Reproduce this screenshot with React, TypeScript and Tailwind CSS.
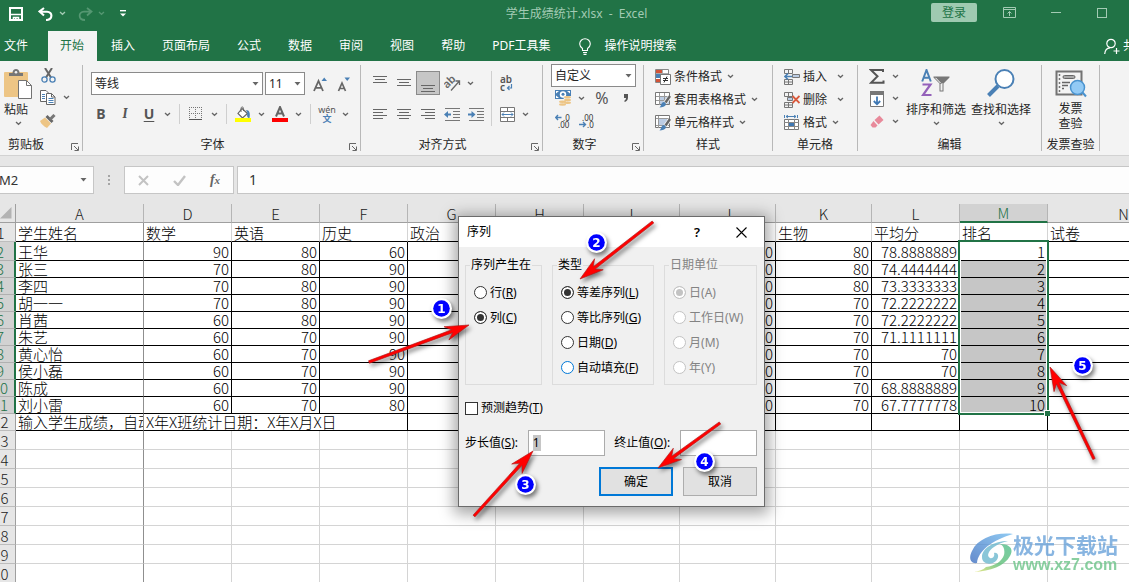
import type { ReactNode } from 'react';

/* ---------- drawing helpers ---------- */

function Svg({ w, h, children }: { w: number; h: number; children: ReactNode }) {
  return (
    <svg width={w} height={h} viewBox={`0 0 ${w} ${h}`} fill="none" className="shrink-0" aria-hidden="true">
      {children}
    </svg>
  );
}

const Chevron = ({ color = '#666' }: { color?: string }) => (
  <Svg w={7} h={5}>
    <path d="M1 1l2.5 2.3L6 1" stroke={color} strokeWidth="1.3" />
  </Svg>
);

const Triangle = () => (
  <Svg w={7} h={4}>
    <path d="M0.5 0h6L3.5 3.5z" fill="#666" />
  </Svg>
);

function Lines({ rows, h = 14 }: { rows: [number, number][]; h?: number }) {
  return (
    <Svg w={14} h={h}>
      {rows.map(([x, w], i) => (
        <path key={i} d={`M${x} ${i * 3 + 0.5}h${w}`} stroke="#666" />
      ))}
    </Svg>
  );
}

const SaveIcon = () => (
  <Svg w={14} h={14}>
    <path d="M1 1h12v12H1z" stroke="#fff" strokeWidth="2" />
    <path d="M2 7.500h10M4.500 13V10.500h5V13" stroke="#fff" strokeWidth="1.600" />
    <path d="M6 11h1.600v2H6z" fill="#fff" />
  </Svg>
);

const UndoIcon = () => (
  <Svg w={15} h={14}>
    <path d="M6 1L1.5 4.5 6 8.5M2 4.7h7c6 0 6 8.3-1 8.3" stroke="#fff" strokeWidth="2.1" />
  </Svg>
);

const RedoIcon = () => (
  <Svg w={15} h={14}>
    <path d="M9 1l4.5 3.5L9 8.5M13 4.7H6c-6 0-6 8.3 1 8.3" stroke="#559772" strokeWidth="1.8" />
  </Svg>
);

const PasteIcon = () => (
  <Svg w={28} h={30}>
    <rect x="0" y="3" width="24" height="25" rx="1" fill="#edc585" />
    <path d="M5 7V4h3.5C8.500 1.500 10 0 12 0s3.500 1.500 3.500 4H19v3z" fill="#767676" />
    <circle cx="12" cy="3.200" r="1.300" fill="#f3f3f3" />
    <path d="M14.500 11.500h8l5 5v13h-13z" fill="#fff" stroke="#737373" />
    <path d="M22.500 11.500v5h5" stroke="#737373" />
  </Svg>
);

const CutIcon = () => (
  <Svg w={15} h={15}>
    <path d="M4 0l6 9.500M11 0L5 9.500" stroke="#666" strokeWidth="2" />
    <circle cx="3.500" cy="11.500" r="2.600" stroke="#4a80b5" strokeWidth="1.300" />
    <circle cx="11.500" cy="11.500" r="2.600" stroke="#4a80b5" strokeWidth="1.300" />
  </Svg>
);

const CopyIcon = () => (
  <Svg w={16} h={15}>
    <path d="M.5.500h5.500l3 3v8H.500z" fill="#fff" stroke="#666" />
    <path d="M2 4.500h3M2 6.500h3M2 8.500h3" stroke="#4a80b5" />
    <path d="M6.500 3.500h5l3.500 3.500v7.500H6.500z" fill="#fff" stroke="#666" />
    <path d="M11.500 3.500V7H15" stroke="#666" />
    <path d="M8.500 8.500h5M8.500 10.500h5M8.500 12.500h5" stroke="#4a80b5" />
  </Svg>
);

const BrushIcon = () => (
  <Svg w={16} h={14}>
    <path d="M0 7l5-3.500 6 6L7 14C4 12.500 1 10 0 7z" fill="#edc585" />
    <path d="M5.500 3l2-2 6 6-2 2z" fill="#666" />
    <path d="M10 5.500L14.500 1" stroke="#777" strokeWidth="3" />
  </Svg>
);

const GrowFont = ({ shrink = false }: { shrink?: boolean }) => (
  <Svg w={14} h={15}>
    {shrink ? (
      <>
        <path d="M1.500 14L5 6l3.500 8M2.800 11.500h4.500" stroke="#666" strokeWidth="1.700" />
        <path d="M7.500 .5h5.500L10.200 4z" fill="#4a80b5" />
      </>
    ) : (
      <>
        <path d="M1 14L5.500 4 10 14M2.500 10.800h6" stroke="#666" strokeWidth="1.800" />
        <path d="M8.500 4H14L11.200 .5z" fill="#4a80b5" />
      </>
    )}
  </Svg>
);

const BorderIcon = () => (
  <Svg w={14} h={14}>
    <path d="M.5 0v12M6.500 0v12M12.500 0v12M0 .5h13M0 6.500h13" stroke="#777" strokeDasharray="1 1" />
    <path d="M0 12.500h13" stroke="#555" />
  </Svg>
);

const FillIcon = () => (
  <Svg w={16} h={16}>
    <path d="M7 2.500l5.500 5-5 4.500L3 7.500z" fill="#fff" stroke="#666" strokeWidth="1.200" />
    <path d="M6 6V2.500C6 .5 8.500.5 8.500 2.500V5" stroke="#666" />
    <path d="M11 4c3.500 0 4.500 3.500 3.500 8-2 0-3-2-2-5z" fill="#4a80b5" />
    <path d="M0 12h16v4H0z" fill="#ff0" />
  </Svg>
);

const FontColorIcon = () => (
  <Svg w={16} h={16}>
    <path d="M4 10.500L8 1l4 9.500M5.400 7.500h5.200" stroke="#666" strokeWidth="2" />
    <path d="M0 12h16v4H0z" fill="#fe0000" />
  </Svg>
);

const OrientationIcon = () => (
  <Svg w={17} h={17}>
    <text x="0" y="11" fontSize="11" fontWeight="600" fontFamily="Noto Sans" fill="#666" transform="rotate(-45 5 9)">
      ab
    </text>
    <path d="M7 15.500L15.500 6M11.500 6h4v4" stroke="#666" strokeWidth="1.300" />
  </Svg>
);

const Indent = ({ right = false }: { right?: boolean }) => (
  <Svg w={17} h={13}>
    <path d="M1 .5h15M9 3.500h7M9 6.500h7M9 9.500h7M1 12.500h15" stroke="#777" />
    {right ? (
      <>
        <path d="M0 6.500h4" stroke="#4a80b5" strokeWidth="2" />
        <path d="M3.500 3v7L7.500 6.500z" fill="#4a80b5" />
      </>
    ) : (
      <>
        <path d="M7 6.500H3" stroke="#4a80b5" strokeWidth="2" />
        <path d="M4 3v7L0 6.500z" fill="#4a80b5" />
      </>
    )}
  </Svg>
);

const WrapIcon = () => (
  <Svg w={14} h={17}>
    <text x="0" y="8" fontSize="10" fontWeight="600" fontFamily="Noto Sans" fill="#555">ab</text>
    <text x="0" y="16" fontSize="10" fontWeight="600" fontFamily="Noto Sans" fill="#555">c</text>
    <path d="M11.500 9v4H7.500M9.500 11l-2 2 2 2" stroke="#4a80b5" strokeWidth="1.200" />
  </Svg>
);

const MergeIcon = () => (
  <Svg w={15} h={15}>
    <path d="M.5.5h14v14H.5zM.5 4.500h14M.5 10.500h14M7.500.5v4M7.500 10.500v4" fill="#fff" stroke="#777" />
    <path d="M2 7.500h11M4 5.500l-2 2 2 2M11 5.500l2 2-2 2" stroke="#4a80b5" />
  </Svg>
);

const MoneyIcon = () => (
  <Svg w={16} h={16}>
    <path d="M0 0h16v9H0z" fill="#4a80b5" />
    <path d="M1 1h3L1 3.500zM15 1h-3l3 2.500zM1 8h3L1 5.500z" fill="#fff" />
    <circle cx="8" cy="4.500" r="3.200" fill="#fff" />
    <circle cx="8" cy="4.300" r="1.500" fill="#4a80b5" />
    <path d="M8.500 6H16v8H9zM3 9.500h6V16H3z" fill="#f3f3f3" />
    <g fill="#edc585">
      <ellipse cx="12.500" cy="7.300" rx="3.500" ry="1.300" />
      <ellipse cx="12.500" cy="10" rx="3.500" ry="1.200" />
      <ellipse cx="12.500" cy="12.700" rx="3.500" ry="1.200" />
      <ellipse cx="7.500" cy="11.700" rx="3.500" ry="1.200" />
      <ellipse cx="7.500" cy="14.500" rx="3.500" ry="1.200" />
    </g>
  </Svg>
);

const Decimal = ({ less = false }: { less?: boolean }) => (
  <Svg w={17} h={15}>
    <g fontSize="8" fontFamily="Noto Sans" fill="#333">
      <text x={less ? 3 : 8} y="7">{less ? '.00' : '.0'}</text>
      <text x={less ? 8 : 3} y="14">{less ? '.0' : '.00'}</text>
    </g>
    {less ? (
      <path d="M0 10.500h6M4 8l2.500 2.500L4 13" stroke="#4a80b5" strokeWidth="1.400" />
    ) : (
      <path d="M6.500 3.500h-6M3 1L.8 3.500 3 6" stroke="#4a80b5" strokeWidth="1.400" />
    )}
  </Svg>
);

const ConditionalIcon = () => (
  <Svg w={16} h={16}>
    <path d="M.5.5h13v13H.5z" fill="#fff" stroke="#888" />
    <path d="M1 1h6v3H1z" fill="#d25338" />
    <path d="M1 5h7v4H1z" fill="#4a80b5" />
    <path d="M1 10h4v3H1z" fill="#d25338" />
    <path d="M7.500 1v4M1 4.500h12" stroke="#aaa" />
    <path d="M5.500 5.500h10v10h-10z" fill="#fff" stroke="#777" />
    <path d="M8 9.500h5M8 11.500h5M12 7.500l-3 6" stroke="#333" />
  </Svg>
);

const TableStyleIcon = ({ cell = false }: { cell?: boolean }) => (
  <Svg w={16} h={16}>
    <path d="M.5.5h14v12H.5z" fill="#fff" stroke="#777" />
    {cell ? <path d="M4 4h8v6H4z" fill="#bccde4" /> : <path d="M5 4h9v8H5z" fill="#bccde4" />}
    <path d={cell ? 'M3.500 1v12M1 3.500h13M1 10.500h13' : 'M4.500 1v12M9.500 1v12M1 4.500h13M1 8.500h13'} stroke="#999" />
    <path d="M15 4.500L10 11" stroke="#f3f3f3" strokeWidth="4" />
    <path d="M15 4L10.500 10.500" stroke="#666" strokeWidth="2.400" />
    <path d="M4 15.500c2.500-.5 1.500-5 5-5.500 3 1 3 5.500-5 5.500z" fill="#4a80b5" />
  </Svg>
);

const InsertIcon = () => (
  <Svg w={16} h={16}>
    <path d="M.5.5h8v4h-8zM4.500.5v4M.5 10.500h8v5h-8zM4.500 10.500v5M.5 13h8" stroke="#777" />
    <path d="M8.500 5.500h7v3h-7z" fill="#bccde4" stroke="#777" />
    <path d="M8 7.500H1M4 4.500l-3 3 3 3" stroke="#4a80b5" strokeWidth="1.600" />
  </Svg>
);

const DeleteIcon = () => (
  <Svg w={16} h={16}>
    <path d="M.5.5h8v4h-8zM4.500.5v4M.5 10.500h8v5h-8zM4.500 10.500v5M.5 13h8" stroke="#777" />
    <path d="M3.500 5.500h5v3h-5z" fill="#bccde4" stroke="#777" />
    <path d="M8.500 4l7 7M15.500 4l-7 7" stroke="#d9593c" strokeWidth="1.800" />
  </Svg>
);

const FormatIcon = () => (
  <Svg w={16} h={16}>
    <path d="M.5 0v3M13.500 0v3M2 1.500h10M4 0L2 1.500 4 3M10 0l2 1.500L10 3" stroke="#4a80b5" />
    <path d="M.5 4.500h14v10H.5z" fill="#fff" stroke="#777" />
    <path d="M5 7h5v5H5z" fill="#3f78b4" />
    <path d="M4.500 4v11M10.500 4v11M0 7.500h15M0 11.500h15" stroke="#888" />
  </Svg>
);

const SigmaIcon = () => (
  <Svg w={16} h={15}>
    <path d="M14 3V1H2l6.500 6.300L2 13.800h12.500V11.500" stroke="#555" strokeWidth="2" />
  </Svg>
);

const FillDownIcon = () => (
  <Svg w={14} h={16}>
    <path d="M.5.5h13v15H.5z" fill="#fff" stroke="#777" />
    <path d="M0 0h14v4H0z" fill="#777" />
    <path d="M7 5.500v8M3.800 10L7 13.300 10.200 10" stroke="#3f78b4" strokeWidth="1.800" />
  </Svg>
);

const EraserIcon = () => (
  <Svg w={14} h={13}>
    <path d="M4.500 5L9.500.5l4 4.500-5 4.500z" fill="#e8899a" />
    <path d="M3.500 6l4 4.500-2 2H2.500l-2-2.500z" fill="#e8899a" />
  </Svg>
);

const SortFilterIcon = () => (
  <Svg w={30} h={28}>
    <path d="M1.200 12.500L5.500 1l4.300 11.500M2.800 8.800h5.400" stroke="#4a80b5" strokeWidth="2" />
    <path d="M1.500 15.500h8L2 26h8.500" stroke="#9461ba" strokeWidth="2.200" />
    <path d="M12.500 7.500h16v1l-6 6v8h-4v-8l-6-6z" fill="#777" />
    <path d="M19.500 15v6.500h2V14z" fill="#f3f3f3" />
    <path d="M14.500 8.800l5 5.200" stroke="#fff" />
  </Svg>
);

const FindIcon = () => (
  <Svg w={28} h={28}>
    <path d="M1.500 26.500L11 17" stroke="#4a80b5" strokeWidth="4" />
    <circle cx="17.500" cy="10" r="9" fill="#fff" stroke="#4a80b5" strokeWidth="2" />
  </Svg>
);

const InvoiceIcon = () => (
  <Svg w={32} h={28}>
    <path d="M1.500 1.500h25v23h-25z" fill="#f3f3f3" stroke="#737373" strokeWidth="2" />
    <path d="M4.500 4v19" stroke="#737373" strokeWidth="1.500" strokeDasharray="2 2" />
    <rect x="8" y="5.500" width="12" height="3" rx="1.500" fill="#aaa" stroke="#666" />
    <path d="M7 12.500h8M7 15.500h6M7 18.500h2" stroke="#666" strokeWidth="1.300" />
    <circle cx="22.500" cy="17.500" r="7" fill="#92caf5" stroke="#4a93cf" strokeWidth="1.500" />
    <path d="M27.500 22.500l3.500 4" stroke="#4a93cf" strokeWidth="2" />
  </Svg>
);

/* ---------- ribbon ---------- */

function IconButton({ label, children, active = false }: { label: string; children: ReactNode; active?: boolean }) {
  return (
    <button
      aria-label={label}
      className={
        active
          ? 'flex h-6 w-6 shrink-0 items-center justify-center border border-[#8a8a8a] bg-[#c6c6c6]'
          : 'flex h-6 w-6 shrink-0 items-center justify-center'
      }
    >
      {children}
    </button>
  );
}

const Drop = ({ label }: { label: string }) => (
  <button aria-label={label} className="flex h-6 w-[13px] shrink-0 items-center justify-center">
    <Chevron />
  </button>
);

const Divider = () => (
  <span className="flex w-[10px] shrink-0 justify-center">
    <span className="h-5 w-px bg-[#cfcfcf]" />
  </span>
);

function Group({ label, width, launcher = false, children }: { label: string; width: string; launcher?: boolean; children: ReactNode }) {
  return (
    <section className={`relative flex shrink-0 flex-col border-r border-[#b8b8b8] ${width}`}>
      <div className="h-[74px]">{children}</div>
      <div className="h-3 text-center leading-3">{label}</div>
      {launcher && (
        <button aria-label={`${label}设置`} className="absolute right-[3px] bottom-0">
          <Svg w={8} h={8}>
            <path d="M.5 7V.5H7M3 3l4 4M7.500 3.500v4h-4" stroke="#666" />
          </Svg>
        </button>
      )}
    </section>
  );
}

function TextButton({ icon, label, pad = 'ml-[5px]' }: { icon: ReactNode; label: string; pad?: string }) {
  return (
    <button className="flex h-[23px] items-center whitespace-nowrap">
      {icon}
      <span className="ml-[3px]">{label}</span>
      <span className={pad}>
        <Chevron />
      </span>
    </button>
  );
}

function Ribbon() {
  return (
    <div className="flex h-[95px] shrink-0 overflow-hidden border-b border-[#d2d2d2] bg-[#f3f3f3] pt-1 pb-1 text-xs text-[#262626]">
      <Group label="剪贴板" width="w-[83px] [&>div:nth-child(2)]:pr-[30px]" launcher>
        <div className="flex pl-1">
          <button className="flex w-7 flex-col items-center pt-1">
            <PasteIcon />
            <span className="-ml-1 pt-[3px] leading-4 whitespace-nowrap">粘贴</span>
            <span className="pt-[3px]">
              <Chevron />
            </span>
          </button>
          <div className="ml-1 flex flex-col">
            <div className="flex h-[21px] items-center"><IconButton label="剪切"><CutIcon /></IconButton></div>
            <div className="flex h-[23px] items-center">
              <IconButton label="复制"><CopyIcon /></IconButton>
              <Drop label="复制选项" />
            </div>
            <div className="flex h-[23px] items-center"><IconButton label="格式刷"><BrushIcon /></IconButton></div>
          </div>
        </div>
      </Group>

      <Group label="字体" width="w-[278px] [&>div:nth-child(2)]:pr-[18px]" launcher>
        <div className="flex flex-col gap-[6px] pt-[7px] pl-[6px]">
          <div className="flex h-6 items-start">
            <button className="ml-[2px] flex h-[23px] w-[172px] items-center justify-between border border-[#8a8a8a] bg-white px-[3px]">
              等线
              <Triangle />
            </button>
            <button className="ml-[2px] mr-[3px] flex h-[23px] w-[40px] items-center justify-between border border-[#8a8a8a] bg-white px-[3px]">
              11
              <Triangle />
            </button>
            <IconButton label="增大字号"><GrowFont /></IconButton>
            <IconButton label="减小字号"><GrowFont shrink /></IconButton>
          </div>
          <div className="flex items-center text-sm text-[#555]">
            <IconButton label="加粗"><b>B</b></IconButton>
            <IconButton label="倾斜"><i className="font-serif font-bold">I</i></IconButton>
            <IconButton label="下划线"><span className="font-bold underline underline-offset-2">U</span></IconButton>
            <Drop label="下划线选项" />
            <Divider />
            <IconButton label="边框"><BorderIcon /></IconButton>
            <Drop label="边框选项" />
            <Divider />
            <IconButton label="填充颜色"><FillIcon /></IconButton>
            <Drop label="填充颜色选项" />
            <IconButton label="字体颜色"><FontColorIcon /></IconButton>
            <Drop label="字体颜色选项" />
            <Divider />
            <IconButton label="拼音">
              <span className="flex flex-col items-center">
                <span className="text-[9px] leading-[9px]">wén</span>
                <span className="text-[9px] leading-[9px] font-bold text-[#4a80b5]">文</span>
              </span>
            </IconButton>
            <Drop label="拼音选项" />
          </div>
        </div>
      </Group>

      <Group label="对齐方式" width="w-[182px] [&>div:nth-child(2)]:pr-[18px]" launcher>
        <div className="flex pt-[6px] pl-[7px]">
          <div className="flex flex-col gap-[7px]">
            <div className="flex">
              <IconButton label="顶端对齐"><Lines rows={[[0, 14], [2, 10], [0, 14]]} h={14} /></IconButton>
              <IconButton label="垂直居中"><Lines rows={[[0, 14], [2, 10], [0, 14]]} h={8} /></IconButton>
              <IconButton label="底端对齐" active>
                <span className="pt-3"><Lines rows={[[0, 14], [2, 10], [0, 14]]} h={8} /></span>
              </IconButton>
              <IconButton label="方向"><OrientationIcon /></IconButton>
              <Drop label="方向选项" />
            </div>
            <div className="flex">
              <IconButton label="左对齐"><Lines rows={[[0, 14], [0, 10], [0, 14], [0, 10]]} h={10} /></IconButton>
              <IconButton label="居中"><Lines rows={[[0, 14], [2, 10], [0, 14], [2, 10]]} h={10} /></IconButton>
              <IconButton label="右对齐"><Lines rows={[[0, 14], [4, 10], [0, 14], [4, 10]]} h={10} /></IconButton>
              <IconButton label="减少缩进量"><Indent /></IconButton>
              <IconButton label="增加缩进量"><Indent right /></IconButton>
            </div>
          </div>
          <span className="mx-[3px] h-[55px] w-px bg-[#cfcfcf]" />
          <div className="flex flex-col gap-[7px]">
            <IconButton label="自动换行"><WrapIcon /></IconButton>
            <div className="flex">
              <IconButton label="合并后居中"><MergeIcon /></IconButton>
              <Drop label="合并选项" />
            </div>
          </div>
        </div>
      </Group>

      <Group label="数字" width="w-[101px] [&>div:nth-child(2)]:pr-[17px]" launcher>
        <div className="flex flex-col pl-2">
          <button className="-mt-px flex h-[23px] w-[85px] items-center justify-between border border-[#8a8a8a] bg-white px-[3px]">
            自定义
            <Triangle />
          </button>
          <div className="flex h-[22px] items-center text-base text-[#555]">
            <IconButton label="会计数字格式"><MoneyIcon /></IconButton>
            <Drop label="会计格式选项" />
            <span className="w-[2px]" />
            <IconButton label="百分比样式">%</IconButton>
            <IconButton label="千位分隔样式">
              <Svg w={6} h={9}>
                <path d="M1 0h4v3.500C5 6 3.500 7.500 1.500 8V6.500c1-.5 1.500-1.300 1.500-2.500H1z" fill="#555" />
              </Svg>
            </IconButton>
          </div>
          <div className="flex">
            <IconButton label="增加小数位数"><Decimal /></IconButton>
            <IconButton label="减少小数位数"><Decimal less /></IconButton>
          </div>
        </div>
      </Group>

      <Group label="样式" width="w-[129px]">
        <div className="flex flex-col pl-[11px]">
          <TextButton icon={<ConditionalIcon />} label="条件格式" />
          <TextButton icon={<TableStyleIcon />} label="套用表格格式" />
          <TextButton icon={<TableStyleIcon cell />} label="单元格样式" />
        </div>
      </Group>

      <Group label="单元格" width="w-[85px]">
        <div className="flex flex-col pl-[11px]">
          <TextButton icon={<InsertIcon />} label="插入" pad="ml-[10px]" />
          <TextButton icon={<DeleteIcon />} label="删除" pad="ml-[10px]" />
          <TextButton icon={<FormatIcon />} label="格式" />
        </div>
      </Group>

      <Group label="编辑" width="w-[184px]">
        <div className="flex pl-[7px]">
          <div className="flex flex-col">
            <div className="flex h-[22px] items-center"><IconButton label="自动求和"><SigmaIcon /></IconButton><Drop label="求和选项" /></div>
            <div className="flex h-[23px] items-center"><IconButton label="填充"><FillDownIcon /></IconButton><Drop label="填充选项" /></div>
            <div className="flex h-[23px] items-center"><IconButton label="清除"><EraserIcon /></IconButton><Drop label="清除选项" /></div>
          </div>
          <button className="ml-1 flex w-[60px] flex-col items-center pt-1 whitespace-nowrap">
            <SortFilterIcon />
            <span className="pt-[5px] leading-4">排序和筛选</span>
            <span className="pt-[3px]"><Chevron /></span>
          </button>
          <button className="ml-[5px] flex w-[60px] flex-col items-center pt-1 whitespace-nowrap">
            <FindIcon />
            <span className="pt-[5px] leading-4">查找和选择</span>
            <span className="pt-[3px]"><Chevron /></span>
          </button>
        </div>
      </Group>

      <Group label="发票查验" width="w-[58px]">
        <button className="flex w-full flex-col items-center pt-[5px] leading-[15px]">
          <InvoiceIcon />
          <span className="pt-[3px]">发票</span>
          <span>查验</span>
        </button>
      </Group>
    </div>
  );
}

/* ---------- title bar and tabs ---------- */

function TitleBar() {
  return (
    <header className="grid h-[31px] shrink-0 grid-cols-[1fr_auto_1fr] text-xs text-[#a3cbb4]">
      <div className="flex h-[27px] items-center pl-[9px]">
        <button aria-label="保存"><SaveIcon /></button>
        <button aria-label="撤消" className="ml-[15px]"><UndoIcon /></button>
        <span className="ml-[6px]"><Chevron color="#a3cbb4" /></span>
        <button aria-label="恢复" className="ml-3"><RedoIcon /></button>
        <span className="ml-[5px]"><Chevron color="#559772" /></span>
        <button aria-label="自定义快速访问工具栏" className="ml-[15px]">
          <Svg w={6} h={7}>
            <path d="M0 .7h6" stroke="#fff" strokeWidth="1.400" />
            <path d="M0 3.500h6L3 6.500z" fill="#fff" />
          </Svg>
        </button>
      </div>
      <h1 className="flex h-[27px] items-center pl-6 whitespace-pre">学生成绩统计.xlsx  -  Excel</h1>
      <div className="flex h-[25px] items-center justify-end pr-[22px]">
        <button className="h-[19px] w-[46px] rounded-[2px] bg-[#9fcab1] leading-[18px] text-[#217346]">登录</button>
        <button aria-label="功能区显示选项" className="ml-[26px]">
          <Svg w={13} h={11}>
            <path d="M.5.5h12v10H.5zM.5 2.500h12M6.500 9V4.500M4.500 6.500l2-2 2 2" stroke="#a3cbb4" />
          </Svg>
        </button>
        <button aria-label="最小化" className="ml-[35px]">
          <Svg w={10} h={11}><path d="M0 5.500h10" stroke="#a3cbb4" /></Svg>
        </button>
        <button aria-label="最大化" className="ml-9">
          <Svg w={10} h={10}><rect x=".5" y=".5" width="9" height="9" stroke="#a3cbb4" /></Svg>
        </button>
      </div>
    </header>
  );
}

const TABS = ['插入', '页面布局', '公式', '数据', '审阅', '视图', '帮助', 'PDF工具集'];

function Tabs() {
  return (
    <nav className="flex h-[30px] shrink-0 items-stretch text-xs whitespace-nowrap text-white">
      <button className="pr-5 pl-1">文件</button>
      <button className="bg-[#f3f3f3] pr-[13px] pl-3 text-[#217346]">开始</button>
      <div className="ml-px flex gap-px">
        {TABS.map((t) => (
          <button key={t} className="px-[13px]">{t}</button>
        ))}
      </div>
      <button className="ml-4 flex items-center gap-[13px]">
        <Svg w={12} h={17}>
          <path d="M3.500 12.500v-2C1.500 9 .7 7.500.7 6a5.300 5.300 0 0110.600 0c0 1.500-.8 3-2.800 4.500v2zM4 14.500h4M4.500 16.400h3" stroke="#fff" strokeWidth="1.100" />
        </Svg>
        操作说明搜索
      </button>
      <button className="ml-auto flex items-center gap-[3px]">
        <Svg w={16} h={17}>
          <circle cx="7" cy="5.500" r="4.200" stroke="#fff" strokeWidth="1.200" />
          <path d="M.7 16c.3-3.500 2-6 5.300-6.200M12.500 10v6M9.500 13h6" stroke="#fff" strokeWidth="1.200" />
        </Svg>
        <span className="w-[6px] overflow-hidden">共享</span>
      </button>
    </nav>
  );
}

function FormulaBar() {
  return (
    <div className="flex h-12 shrink-0 items-start bg-[#e6e6e6] pt-[10px]">
      <button className="flex h-7 w-[94px] items-center justify-between border border-l-0 border-[#c6c6c6] bg-[#fdfdfd] pr-[6px] text-sm text-[#333]">
        <span className="-ml-px text-[13px]">M2</span>
        <Triangle />
      </button>
      <span className="flex h-7 w-[30px] items-center justify-center">
        <Svg w={2} h={10}>
          <path d="M0 0h2v2H0zM0 4h2v2H0zM0 8h2v2H0z" fill="#a5a5a5" />
        </Svg>
      </span>
      <div className="flex h-7 w-[110px] items-center border border-[#c6c6c6] bg-[#fdfdfd]">
        <button aria-label="取消" className="flex w-9 justify-center">
          <Svg w={11} h={11}><path d="M1 1l9 9M10 1l-9 9" stroke="#c3c3c3" strokeWidth="2" /></Svg>
        </button>
        <button aria-label="输入" className="flex w-9 justify-center">
          <Svg w={13} h={11}><path d="M1 6l4 4 7-9" stroke="#c3c3c3" strokeWidth="2.400" /></Svg>
        </button>
        <button aria-label="插入函数" className="w-9 text-center font-['Liberation_Serif',serif] text-sm font-bold text-[#666] italic">
          f<span className="text-[11px]">x</span>
        </button>
      </div>
      <input
        aria-label="编辑栏"
        defaultValue="1"
        className="ml-[3px] h-7 min-w-0 flex-1 border border-r-0 border-[#c6c6c6] bg-[#fdfdfd] pb-0.5 pl-[11px] text-sm text-[#333] outline-none"
      />
    </div>
  );
}

/* ---------- worksheet ---------- */

const HEAD = ['A', 'D', 'E', 'F', 'G', 'H', 'I', 'J', 'K', 'L', 'M', 'N'];
const TITLES = ['学生姓名', '数学', '英语', '历史', '政治', '', '', '', '生物', '平均分', '排名', '试卷'];
const DATA: [string, number, number, number, number, string][] = [
  ['王华', 90, 80, 60, 80, '78.8888889'],
  ['张三', 70, 80, 90, 80, '74.4444444'],
  ['李四', 70, 80, 90, 80, '73.3333333'],
  ['胡一一', 70, 80, 90, 70, '72.2222222'],
  ['肖茜', 60, 80, 90, 70, '72.2222222'],
  ['朱艺', 60, 70, 90, 70, '71.1111111'],
  ['黄心怡', 60, 70, 90, 70, '70'],
  ['侯小磊', 60, 70, 90, 70, '70'],
  ['陈成', 60, 70, 90, 70, '68.8888889'],
  ['刘小雷', 60, 70, 80, 70, '67.7777778'],
];

const rowHead = 'border-r border-b border-[#9f9f9f] border-b-[#bdbdbd] bg-[#e6e6e6] text-center align-bottom font-light text-[#222]';
const rowHeadSel = 'border-r-2 border-b border-[#217346] border-b-[#b0b0b0] bg-[#d2d2d2] text-center align-bottom font-light text-[#217346]';
const cellBase = 'overflow-hidden border-r border-b border-b-black px-0.5 align-bottom';

function Sheet() {
  return (
    <div className="min-h-0 flex-1 overflow-hidden bg-white">
      <table className="-ml-[14px] w-[calc(100%+14px)] min-w-[1214px] table-fixed border-separate border-spacing-0 font-['Noto_Sans_CJK_SC',sans-serif] text-[15px] leading-4 font-light whitespace-nowrap text-black">
        <colgroup>
          <col className="w-[30px]" />
          <col className="w-[128px]" />
          {[0, 1, 2, 3, 4].map((i) => <col key={i} className="w-[88px]" />)}
          <col className="w-[96px]" />
          <col className="w-[96px]" />
          <col className="w-[96px]" />
          <col className="w-[88px]" />
          <col className="w-[88px]" />
          <col />
        </colgroup>
        <thead>
          <tr className="h-[19px]">
            <th className="border-r border-b border-[#9f9f9f] bg-[#e6e6e6]">
              <span className="flex justify-end pr-[3px]">
                <Svg w={12} h={12}><path d="M11.500 0v11.500H0z" fill="#b3b3b3" /></Svg>
              </span>
            </th>
            {HEAD.map((c) => (
              <th
                key={c}
                className={
                  c === 'M'
                    ? 'border-r border-b-2 border-r-[#b5b5b5] border-b-[#217346] bg-[#d2d2d2] align-bottom font-light text-[#217346]'
                    : 'border-r border-b border-r-[#b5b5b5] border-b-[#9f9f9f] bg-[#e6e6e6] align-bottom font-light text-[#222]'
                }
              >
                {c}
              </th>
            ))}
          </tr>
        </thead>
        <tbody>
          <tr className="h-[19px]">
            <th className={rowHead}>1</th>
            {TITLES.map((t, i) => (
              <td key={i} className={`${cellBase} ${i === 0 ? 'border-r-[#8f8f8f]' : 'border-r-[#d4d4d4]'}`}>{t}</td>
            ))}
          </tr>
          {DATA.map(([name, math, eng, hist, bio, avg], i) => (
            <tr key={name} className={i === 0 ? 'h-[19px]' : 'h-[17px]'}>
              <th className={rowHeadSel}>{i + 2}</th>
              <td className={`${cellBase} border-r-[#8f8f8f]`}>{name}</td>
              <td className={`${cellBase} border-r-black text-right`}>{math}</td>
              <td className={`${cellBase} border-r-black text-right`}>{eng}</td>
              <td className={`${cellBase} border-r-black text-right`}>{hist}</td>
              <td className={`${cellBase} border-r-black`} />
              <td className={`${cellBase} border-r-black`} />
              <td className={`${cellBase} border-r-black`} />
              <td className={`${cellBase} border-r-black text-right`}>0</td>
              <td className={`${cellBase} border-r-black text-right`}>{bio}</td>
              <td className={`${cellBase} border-r-black text-right`}>{avg}</td>
              <td
                className={
                  i === 0
                    ? 'relative border-r border-b border-black px-0.5 text-right align-bottom'
                    : 'border-r border-b border-black bg-[#c6c6c6] px-0.5 text-right align-bottom'
                }
              >
                {i + 1}
                {i === 0 && (
                  <span className="absolute -top-[2px] -left-[2px] h-[175px] w-[91px] border-2 border-[#217346] shadow-[inset_0_0_0_1px_white]">
                    <span className="absolute -right-[3px] -bottom-[3px] size-[6px] border-t border-l border-white bg-[#217346]" />
                  </span>
                )}
              </td>
              <td className={`${cellBase} border-r-black`} />
            </tr>
          ))}
          <tr className="h-[17px]">
            <th className={rowHead}>12</th>
            <td className={`${cellBase} border-r-[#8f8f8f]`}>输入学生成绩，自动</td>
            <td colSpan={3} className={`${cellBase} border-r-black`}>X年X班统计日期：X年X月X日</td>
            {[0, 1, 2, 3, 4, 5, 6, 7].map((i) => <td key={i} className={`${cellBase} border-r-black`} />)}
          </tr>
          {[13, 14, 15, 16, 17, 18, 19, 20].map((n) => (
            <tr key={n} className="h-[19px]">
              <th className={rowHead}>{n}</th>
              {HEAD.map((c) => (
                <td key={c} className={`border-r border-b border-[#d4d4d4] ${c === 'A' ? 'border-r-[#8f8f8f]' : ''}`} />
              ))}
            </tr>
          ))}
        </tbody>
      </table>
    </div>
  );
}

/* ---------- series dialog ---------- */

function Option({ name, text, hotkey, checked, disabled, hot }: { name: string; text: string; hotkey: string; checked?: boolean; disabled?: boolean; hot?: boolean }) {
  const tone = disabled
    ? 'border-[#c3c3c3] checked:bg-[#c3c3c3]'
    : hot
      ? 'border-[#0078d7] checked:bg-[#333]'
      : 'border-[#333] checked:bg-[#333]';
  return (
    <label className={`flex h-[25px] items-center gap-[3px] ${disabled ? 'text-[#838383]' : ''}`}>
      <input
        type="radio"
        name={name}
        defaultChecked={checked}
        disabled={disabled}
        className={`size-[13px] shrink-0 appearance-none rounded-full border bg-white checked:shadow-[inset_0_0_0_2px_white] ${tone}`}
      />
      <span>
        {text}({disabled ? hotkey : <u>{hotkey}</u>})
      </span>
    </label>
  );
}

function SeriesDialog() {
  return (
    <div
      role="dialog"
      aria-label="序列"
      className="absolute top-[216px] left-[458px] w-[307px] border border-[#6b6b6b] bg-[#f0f0f0] text-xs leading-4 whitespace-nowrap text-black shadow-[0_3px_14px_4px_rgba(0,0,0,0.35)]"
    >
      <div className="flex h-[30px] items-center bg-white pr-[17px] pl-2">
        <span>序列</span>
        <button aria-label="帮助" className="ml-auto text-[13px] font-semibold">?</button>
        <button aria-label="关闭" className="ml-9">
          <Svg w={11} h={11}><path d="M.5.5l10 10M10.500.5l-10 10" stroke="#000" strokeWidth="1.100" /></Svg>
        </button>
      </div>
      <form className="pt-[10px] pr-[7px] pb-[10px] pl-[6px]" onSubmit={(e) => e.preventDefault()}>
        <div className="flex gap-[10px]">
          <fieldset className="h-32 w-[77px] border border-[#dcdcdc] px-2">
            <legend className="-ml-1 px-px">序列产生在</legend>
            <div className="pt-[7px]">
              <Option name="dir" text="行" hotkey="R" />
              <Option name="dir" text="列" hotkey="C" checked />
            </div>
          </fieldset>
          <fieldset className="h-32 w-[102px] border border-[#dcdcdc] px-2">
            <legend className="-ml-1 px-px">类型</legend>
            <div className="pt-[7px]">
              <Option name="type" text="等差序列" hotkey="L" checked />
              <Option name="type" text="等比序列" hotkey="G" />
              <Option name="type" text="日期" hotkey="D" />
              <Option name="type" text="自动填充" hotkey="F" hot />
            </div>
          </fieldset>
          <fieldset className="h-32 w-[93px] border border-[#dcdcdc] px-2">
            <legend className="-ml-1 px-px text-[#838383]">日期单位</legend>
            <div className="pt-[7px]">
              <Option name="unit" text="日" hotkey="A" checked disabled />
              <Option name="unit" text="工作日" hotkey="W" disabled />
              <Option name="unit" text="月" hotkey="M" disabled />
              <Option name="unit" text="年" hotkey="Y" disabled />
            </div>
          </fieldset>
        </div>
        <label className="mt-[15px] flex items-center gap-[3px]">
          <input type="checkbox" className="size-[13px] appearance-none border border-[#333] bg-white checked:bg-[#333]" />
          <span>预测趋势(<u>T</u>)</span>
        </label>
        <div className="mt-[14px] flex items-center">
          <label htmlFor="step" className="w-[63px]">步长值(<u>S</u>):</label>
          <span className="flex h-[26px] w-[78px] items-center border border-[#ababab] bg-white pl-1">
            <input
              id="step"
              defaultValue="1"
              className="h-4 w-2 bg-[#c6c6c6] outline-none"
            />
          </span>
          <label htmlFor="stop" className="ml-[9px] w-[66px]">终止值(<u>O</u>):</label>
          <input id="stop" className="h-[26px] w-[77px] border border-[#ababab] bg-white px-1 outline-none" />
        </div>
        <div className="mt-[11px] flex justify-end gap-[10px]">
          <button className="h-[29px] w-[74px] border-2 border-[#0078d7] bg-[#e1e1e1]">确定</button>
          <button className="h-[29px] w-[74px] border border-[#adadad] bg-[#e1e1e1]">取消</button>
        </div>
      </form>
    </div>
  );
}

/* ---------- annotations ---------- */

const ARROWS = [
  { from: [369, 362], to: [469, 325] },
  { from: [653, 222], to: [580, 279] },
  { from: [474, 516], to: [533, 451] },
  { from: [720, 423], to: [658, 468] },
  { from: [1094, 459], to: [1050, 367] },
];
const BADGES = [[441, 308], [596, 242], [525, 484], [704, 461], [1082, 365]];

function Annotations() {
  return (
    <svg width="1129" height="582" viewBox="0 0 1129 582" className="pointer-events-none absolute top-0 left-0 drop-shadow-[2px_3px_2px_rgba(0,0,0,0.5)]">
      {ARROWS.map(({ from: [x1, y1], to: [x2, y2] }, i) => {
        const len = Math.hypot(x2 - x1, y2 - y1);
        const deg = (Math.atan2(y2 - y1, x2 - x1) * 180) / Math.PI;
        return (
          <path
            key={i}
            transform={`translate(${x1} ${y1}) rotate(${deg})`}
            d={`M0 -1.300L${len - 18} -1.500L${len - 24} -7L${len} 0L${len - 24} 7L${len - 18} 1.500L0 1.300z`}
            fill="#f00"
            stroke="#b01818"
            strokeWidth="0.600"
          />
        );
      })}
      {BADGES.map(([x, y], i) => (
        <g key={i}>
          <circle cx={x + 0.5} cy={y + 0.5} r="10.500" fill="#fff" />
          <circle cx={x + 0.5} cy={y + 0.5} r="8.300" fill="#00f" />
          <text x={x + 0.5} y={y + 5} textAnchor="middle" fontSize="12" fontWeight="700" fontFamily="DejaVu Sans" fill="#fff">
            {i + 1}
          </text>
        </g>
      ))}
    </svg>
  );
}

function Watermark() {
  return (
    <div className="pointer-events-none absolute right-[11px] bottom-[7px] flex items-center opacity-80">
      <svg width="43" height="42" viewBox="0 0 43 42" aria-hidden="true">
        <defs>
          <linearGradient id="swirl" x1="0" y1="1" x2="1" y2="0">
            <stop offset="0" stopColor="#3f6fc0" />
            <stop offset="1" stopColor="#74bdf0" />
          </linearGradient>
          <linearGradient id="leaf" x1="0" y1="1" x2="1" y2="0">
            <stop offset="0" stopColor="#e6e36a" />
            <stop offset="0.45" stopColor="#63c077" />
            <stop offset="1" stopColor="#4fbf8e" />
          </linearGradient>
        </defs>
        <path d="M43 1C26-1 8 5 2 18c-4 8-1 13 5 12C8 18 22 7 43 1z" fill="url(#swirl)" />
        <path d="M38 8C24 8 12 15 12 24c0 8 10 8 14 4 4-4 2-9-2-8 1 3-1 6-4 5-4-2-1-8 4-11 4-3 9-5 14-6z" fill="#6cb8cf" />
        <path d="M30 11c10 0 14 5 10 12C35 33 20 38 4 39c5-1 9-2 12-5 9-1 16-6 18-12 1-5 0-9-4-11z" fill="url(#leaf)" />
      </svg>
      <div className="flex flex-col">
        <span className="text-[21px] leading-[22px] font-bold text-[#6ba3da]">极光下载站</span>
        <span className="font-['Liberation_Sans',sans-serif] text-base leading-[18px] font-bold text-[#6cc489]">www.xz7.com</span>
      </div>
    </div>
  );
}

export default function App() {
  return (
    <div className="relative flex h-screen flex-col overflow-hidden bg-[#217346] font-['Noto_Sans','Noto_Sans_CJK_SC',sans-serif]">
      <TitleBar />
      <Tabs />
      <Ribbon />
      <FormulaBar />
      <Sheet />
      <SeriesDialog />
      <Watermark />
      <Annotations />
    </div>
  );
}
